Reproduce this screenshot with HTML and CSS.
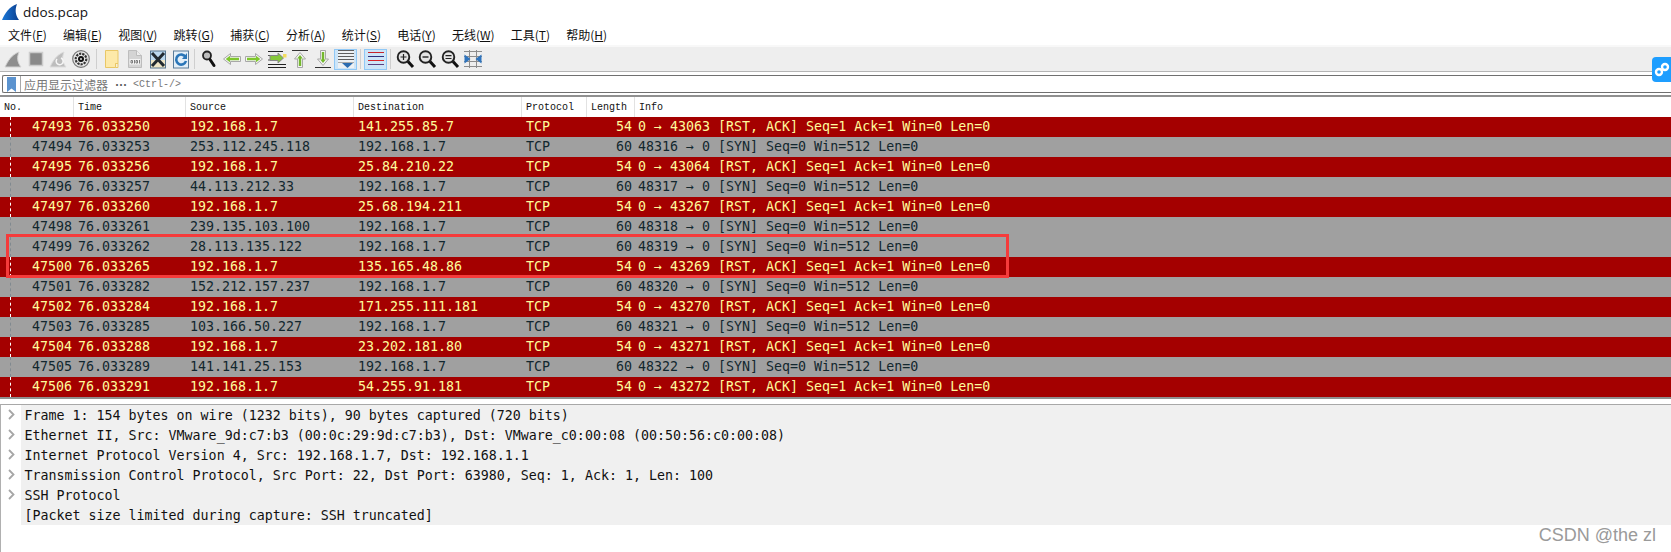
FILE: index.html
```html
<!DOCTYPE html>
<html lang="zh">
<head>
<meta charset="utf-8">
<title>ddos.pcap</title>
<link rel="stylesheet" href="styles.css">
</head>
<body>
<div class="app">
  <div class="titlebar">
    <svg class="fin" width="17" height="17" viewBox="0 0 17 17"><defs><linearGradient id="fg" x1="0" y1="0" x2="1" y2="0"><stop offset="0" stop-color="#1a78d8"/><stop offset="1" stop-color="#0c3f8f"/></linearGradient></defs><path d="M0 16C3 9 7 3 15 0c-2 5-2 11 2 16z" fill="url(#fg)"/></svg>
    <span class="title">ddos.pcap</span>
  </div>
  <div class="menubar">
    <span>文件(<u>F</u>)</span><span>编辑(<u>E</u>)</span><span>视图(<u>V</u>)</span><span>跳转(<u>G</u>)</span><span>捕获(<u>C</u>)</span><span>分析(<u>A</u>)</span><span>统计(<u>S</u>)</span><span>电话(<u>Y</u>)</span><span>无线(<u>W</u>)</span><span>工具(<u>T</u>)</span><span>帮助(<u>H</u>)</span>
  </div>
  <div class="toolbar">
    <span class="tb"><svg viewBox="0 0 20 20"><path d="M2 18C5 12 8 6 16 3c-2 5-2 10 2 15z" fill="#8e8e8e" stroke="#d2d2d2"/></svg></span>
    <span class="tb"><svg viewBox="0 0 20 20"><rect x="3.500" y="3.500" width="13" height="13" fill="#8a8a8a" stroke="#cccccc" stroke-width="1.500"/></svg></span>
    <span class="tb"><svg viewBox="0 0 20 20"><path d="M2 18C5 12 8 6 16 3c-2 5-2 10 2 15z" fill="#bdbdbd" stroke="#dcdcdc"/><path d="M13 9a3.500 3.500 0 1 1-4 1" fill="none" stroke="#f6f6f6" stroke-width="1.500"/></svg></span>
    <span class="tb"><svg viewBox="0 0 20 20"><circle cx="10" cy="10" r="8.300" fill="#e8e8e8" stroke="#777" stroke-width="1.200"/><circle cx="10" cy="10" r="5.300" fill="none" stroke="#333" stroke-width="2.200" stroke-dasharray="2.200 1"/><circle cx="10" cy="10" r="3" fill="#111"/><circle cx="10" cy="10" r="1" fill="#ddd"/></svg></span>
    <span class="sep sep-wide"></span>
    <span class="tb"><svg viewBox="0 0 20 20"><path d="M3.500 1.500h12.500v13h-2.500v4h-10z" fill="#fde9a9" stroke="#e9c766"/><path d="M13.500 14.500h2.500v4h-2.500z" fill="#f7f0d8" stroke="#e9c766"/></svg></span>
    <span class="tb"><svg viewBox="0 0 20 20"><path d="M3.500 1.500h8l5 5v12h-13z" fill="#d4d4d4" stroke="#bdbdbd"/><path d="M11.500 1.500v5h5" fill="#eee" stroke="#bdbdbd"/><rect x="4.500" y="10" width="11" height="5.500" fill="#f4f4f4"/><path d="M6 11.500h1.500v2.500H6zM11 11.500h1.500v2.500H11zM9.500 11v3.500M14.500 11v3.500" fill="none" stroke="#7d7d7d"/></svg></span>
    <span class="tb"><svg viewBox="0 0 20 20"><rect x="2.500" y="2" width="15" height="9" fill="#bcd8ee"/><rect x="2.500" y="11" width="15" height="8" fill="#efe5c6"/><rect x="2.500" y="2" width="15" height="17" fill="none" stroke="#56748d"/><path d="M4 4l12 13M16 4 4 17" stroke="#222a30" stroke-width="3"/></svg></span>
    <span class="tb"><svg viewBox="0 0 20 20"><rect x="2.500" y="2" width="15" height="17" fill="#e3eff8" stroke="#5b7d9a"/><path d="M14.500 8a5 5 0 1 0 .5 4" fill="none" stroke="#2a76b8" stroke-width="2.600"/><path d="M16 4v6h-5z" fill="#2a76b8"/></svg></span>
    <span class="sep"></span>
    <span class="tb"><svg viewBox="0 0 20 20"><circle cx="8" cy="6.500" r="4" fill="#bcbcbc" stroke="#222" stroke-width="1.800"/><path d="M11 10.500l4 6" stroke="#111" stroke-width="3" stroke-linecap="round"/></svg></span>
    <span class="tb"><svg viewBox="0 0 20 20"><path d="M8.500 4.500 1.500 10l7 5.500v-3h10v-5h-10z" fill="#f4f4f4" stroke="#a8a8a8"/><path d="M8 6.800 3.700 10 8 13.200v-2h9v-2.400H8z" fill="#7fc62e"/></svg></span>
    <span class="tb"><svg viewBox="0 0 20 20"><path d="M11.500 4.500 18.500 10l-7 5.500v-3h-10v-5h10z" fill="#f4f4f4" stroke="#a8a8a8"/><path d="M12 6.800 16.300 10 12 13.200v-2H3v-2.400h9z" fill="#7fc62e"/></svg></span>
    <span class="tb"><svg viewBox="0 0 20 20"><path d="M1 2.500h15M1 15.500h18M1 18.500h18" stroke="#222"/><path d="M1 6.500h8M1 11h8" stroke="#555"/><path d="M11 4l5.500 5L11 14v-2.500H3v-5h8z" fill="#86c83a" stroke="#888"/><rect x="16" y="5" width="3.500" height="3.500" fill="#f3dc5e"/></svg></span>
    <span class="tb"><svg viewBox="0 0 20 20"><path d="M2 1.500h16" stroke="#333"/><path d="M10 3.500l5.500 6.500H12.500v8.500h-5V10H4.500z" fill="#f4f4f4" stroke="#a8a8a8"/><path d="M10 6l2.800 3.500H11.200V17H8.800V9.500H7.200z" fill="#74b82e"/></svg></span>
    <span class="tb"><svg viewBox="0 0 20 20"><path d="M2 18.500h16" stroke="#333"/><path d="M10 16.500l5.500-6.500H12.500V1.500h-5V10H4.500z" fill="#f4f4f4" stroke="#a8a8a8"/><path d="M10 14l2.800-3.500H11.200V3H8.800v7.500H7.200z" fill="#74b82e"/></svg></span>
    <span class="tb active"><svg viewBox="0 0 20 20"><rect x="2" y="1" width="16" height="18" fill="#eef1f3"/><path d="M2 1.500h16M2 4.500h16M2 7.500h16M2 10.500h16" stroke="#5f5f5f"/><path d="M2 13.500h16" stroke="#aaa"/><path d="M6 14h11l-5.500 5z" fill="#2b6cb0"/></svg></span>
    <span class="sep sep-mid"></span>
    <span class="tb active"><svg viewBox="0 0 20 20"><path d="M2 3.500h16" stroke="#c9242b"/><path d="M2 7.500h16" stroke="#2f2f7d"/><path d="M2 11.500h16" stroke="#d8232a"/><path d="M2 15.500h16" stroke="#5b3f80"/></svg></span>
    <span class="sep sep-last"></span>
    <span class="tb"><svg viewBox="0 0 20 20"><circle cx="8.500" cy="8" r="5.800" fill="#e4e4e4" stroke="#222" stroke-width="1.900"/><path d="M5.500 8h6M8.500 5v6" stroke="#222" stroke-width="1.200"/><path d="M13 12.500l5 5.500" stroke="#111" stroke-width="3"/></svg></span>
    <span class="tb"><svg viewBox="0 0 20 20"><circle cx="8.500" cy="8" r="5.800" fill="#e4e4e4" stroke="#222" stroke-width="1.900"/><path d="M5.500 8h6" stroke="#222" stroke-width="1.400"/><path d="M13 12.500l5 5.500" stroke="#111" stroke-width="3"/></svg></span>
    <span class="tb"><svg viewBox="0 0 20 20"><circle cx="8.500" cy="8" r="5.800" fill="#e4e4e4" stroke="#222" stroke-width="1.900"/><path d="M5.500 6.700h6M5.500 9.500h6" stroke="#222" stroke-width="1.200"/><path d="M13 12.500l5 5.500" stroke="#111" stroke-width="3"/></svg></span>
    <span class="tb"><svg viewBox="0 0 20 20"><path d="M1 2.500h18M1 17.500h18M1 7.500h18M1 12.500h18M6.500 1v18M13.500 1v18" stroke="#8c8c8c"/><path d="M1.500 5.500l6 4.500-6 4.500zM18.500 5.500l-6 4.500 6 4.500z" fill="#2f74bd"/></svg></span>
  </div>
  <div class="filterbar">
    <div class="filter">
      <span class="bookmark"><svg width="9" height="15" viewBox="0 0 9 15"><path d="M0 0h9v15L4.500 11.500 0 15z" fill="#5b93cf"/></svg></span>
      <span class="placeholder">应用显示过滤器<span class="dots">⋯</span><span class="mono">&lt;Ctrl-/&gt;</span></span>
    </div>
  </div>
  <div class="packets">
    <div class="row head"><span class="c no">No.</span><span class="c time">Time</span><span class="c src">Source</span><span class="c dst">Destination</span><span class="c proto">Protocol</span><span class="c len">Length</span><span class="c info">Info</span></div>
    <div class="row red"><span class="c no">47493</span><span class="c time">76.033250</span><span class="c src">192.168.1.7</span><span class="c dst">141.255.85.7</span><span class="c proto">TCP</span><span class="c len">54</span><span class="c info">0 → 43063 [RST, ACK] Seq=1 Ack=1 Win=0 Len=0</span></div>
    <div class="row gray"><span class="c no">47494</span><span class="c time">76.033253</span><span class="c src">253.112.245.118</span><span class="c dst">192.168.1.7</span><span class="c proto">TCP</span><span class="c len">60</span><span class="c info">48316 → 0 [SYN] Seq=0 Win=512 Len=0</span></div>
    <div class="row red"><span class="c no">47495</span><span class="c time">76.033256</span><span class="c src">192.168.1.7</span><span class="c dst">25.84.210.22</span><span class="c proto">TCP</span><span class="c len">54</span><span class="c info">0 → 43064 [RST, ACK] Seq=1 Ack=1 Win=0 Len=0</span></div>
    <div class="row gray"><span class="c no">47496</span><span class="c time">76.033257</span><span class="c src">44.113.212.33</span><span class="c dst">192.168.1.7</span><span class="c proto">TCP</span><span class="c len">60</span><span class="c info">48317 → 0 [SYN] Seq=0 Win=512 Len=0</span></div>
    <div class="row red"><span class="c no">47497</span><span class="c time">76.033260</span><span class="c src">192.168.1.7</span><span class="c dst">25.68.194.211</span><span class="c proto">TCP</span><span class="c len">54</span><span class="c info">0 → 43267 [RST, ACK] Seq=1 Ack=1 Win=0 Len=0</span></div>
    <div class="row gray"><span class="c no">47498</span><span class="c time">76.033261</span><span class="c src">239.135.103.100</span><span class="c dst">192.168.1.7</span><span class="c proto">TCP</span><span class="c len">60</span><span class="c info">48318 → 0 [SYN] Seq=0 Win=512 Len=0</span></div>
    <div class="row gray"><span class="c no">47499</span><span class="c time">76.033262</span><span class="c src">28.113.135.122</span><span class="c dst">192.168.1.7</span><span class="c proto">TCP</span><span class="c len">60</span><span class="c info">48319 → 0 [SYN] Seq=0 Win=512 Len=0</span></div>
    <div class="row red"><span class="c no">47500</span><span class="c time">76.033265</span><span class="c src">192.168.1.7</span><span class="c dst">135.165.48.86</span><span class="c proto">TCP</span><span class="c len">54</span><span class="c info">0 → 43269 [RST, ACK] Seq=1 Ack=1 Win=0 Len=0</span></div>
    <div class="row gray"><span class="c no">47501</span><span class="c time">76.033282</span><span class="c src">152.212.157.237</span><span class="c dst">192.168.1.7</span><span class="c proto">TCP</span><span class="c len">60</span><span class="c info">48320 → 0 [SYN] Seq=0 Win=512 Len=0</span></div>
    <div class="row red"><span class="c no">47502</span><span class="c time">76.033284</span><span class="c src">192.168.1.7</span><span class="c dst">171.255.111.181</span><span class="c proto">TCP</span><span class="c len">54</span><span class="c info">0 → 43270 [RST, ACK] Seq=1 Ack=1 Win=0 Len=0</span></div>
    <div class="row gray"><span class="c no">47503</span><span class="c time">76.033285</span><span class="c src">103.166.50.227</span><span class="c dst">192.168.1.7</span><span class="c proto">TCP</span><span class="c len">60</span><span class="c info">48321 → 0 [SYN] Seq=0 Win=512 Len=0</span></div>
    <div class="row red"><span class="c no">47504</span><span class="c time">76.033288</span><span class="c src">192.168.1.7</span><span class="c dst">23.202.181.80</span><span class="c proto">TCP</span><span class="c len">54</span><span class="c info">0 → 43271 [RST, ACK] Seq=1 Ack=1 Win=0 Len=0</span></div>
    <div class="row gray"><span class="c no">47505</span><span class="c time">76.033289</span><span class="c src">141.141.25.153</span><span class="c dst">192.168.1.7</span><span class="c proto">TCP</span><span class="c len">60</span><span class="c info">48322 → 0 [SYN] Seq=0 Win=512 Len=0</span></div>
    <div class="row red"><span class="c no">47506</span><span class="c time">76.033291</span><span class="c src">192.168.1.7</span><span class="c dst">54.255.91.181</span><span class="c proto">TCP</span><span class="c len">54</span><span class="c info">0 → 43272 [RST, ACK] Seq=1 Ack=1 Win=0 Len=0</span></div>
    <div class="highlight"></div>
  </div>
  <div class="details">
    <div class="node"><svg class="arrow" width="7" height="11" viewBox="0 0 7 11"><path d="M1 1l4.500 4.500L1 10" fill="none" stroke="#a6a6a6" stroke-width="1.800"/></svg>Frame 1: 154 bytes on wire (1232 bits), 90 bytes captured (720 bits)</div>
    <div class="node"><svg class="arrow" width="7" height="11" viewBox="0 0 7 11"><path d="M1 1l4.500 4.500L1 10" fill="none" stroke="#a6a6a6" stroke-width="1.800"/></svg>Ethernet II, Src: VMware_9d:c7:b3 (00:0c:29:9d:c7:b3), Dst: VMware_c0:00:08 (00:50:56:c0:00:08)</div>
    <div class="node"><svg class="arrow" width="7" height="11" viewBox="0 0 7 11"><path d="M1 1l4.500 4.500L1 10" fill="none" stroke="#a6a6a6" stroke-width="1.800"/></svg>Internet Protocol Version 4, Src: 192.168.1.7, Dst: 192.168.1.1</div>
    <div class="node"><svg class="arrow" width="7" height="11" viewBox="0 0 7 11"><path d="M1 1l4.500 4.500L1 10" fill="none" stroke="#a6a6a6" stroke-width="1.800"/></svg>Transmission Control Protocol, Src Port: 22, Dst Port: 63980, Seq: 1, Ack: 1, Len: 100</div>
    <div class="node"><svg class="arrow" width="7" height="11" viewBox="0 0 7 11"><path d="M1 1l4.500 4.500L1 10" fill="none" stroke="#a6a6a6" stroke-width="1.800"/></svg>SSH Protocol</div>
    <div class="node">[Packet size limited during capture: SSH truncated]</div>
  </div>
  <div class="float-btn"><svg width="18" height="18" viewBox="0 0 18 18"><circle cx="6" cy="11" r="3" fill="none" stroke="#fff" stroke-width="2.400"/><circle cx="12" cy="6" r="3" fill="none" stroke="#fff" stroke-width="2.400"/></svg></div>
  <div class="watermark">CSDN @the zl</div>
</div>
</body>
</html>
```
FILE: styles.css
```css
* { box-sizing: border-box; }
html, body { margin: 0; padding: 0; background: #fff; }
.app { position: relative; width: 1671px; height: 552px; overflow: hidden; font-family: "DejaVu Sans Mono", monospace; }

.titlebar { height: 24px; display: flex; align-items: center; padding-left: 2px; gap: 4px; }
.title { font: 13.5px "Open Sans", sans-serif; color: #111; }

.menubar { height: 21px; display: flex; align-items: center; gap: 16.2px; padding-left: 8px; font: 12px "Noto Sans CJK SC", sans-serif; color: #111; }

.toolbar { height: 27px; padding-left: 1.5px; display: flex; align-items: center; background: #eeeeee; border-top: 2px solid #f8f8f8; border-bottom: 1px solid #b4b4b4; }
.tb { width: 22.8px; height: 21px; flex: none; display: flex; align-items: center; justify-content: center; }
.tb svg { width: 20px; height: 20px; flex: none; }
.tb.active { background: #cde5f8; outline: 1px solid #90c8f6; outline-offset: -1px; }
.sep { width: 1px; height: 20px; flex: none; background: #cfcfcf; margin: 0 2.15px; }
.sep-wide { margin: 0 3.65px; }
.sep-mid { margin: 0 3.15px; }
.sep-last { margin: 0 2.6px; }

.filterbar { padding: 3px 0 0 2px; height: 23px; }
.filter { height: 18px; display: flex; align-items: center; border: 1px solid #707070; border-right: 0; background: #fff; border-radius: 2px 0 0 2px; }
.bookmark { width: 18px; height: 16px; flex: none; display: flex; justify-content: center; padding-top: 1px; border-right: 1px solid #a8a8a8; }
.placeholder { padding-left: 3px; display: flex; align-items: center; font: 12px "Noto Sans CJK SC", sans-serif; color: #777; }
.dots { width: 25px; padding-left: 7px; font-weight: 700; color: #555; }
.mono { font: 10px "Liberation Mono", monospace; }

.packets { position: relative; border-top: 2px solid #909090; border-bottom: 2px solid #909090; }
.row { display: flex; height: 20px; align-items: center; padding-bottom: 2px; font-size: 13.3px; position: relative; white-space: pre; }
.c { flex: none; padding-left: 4px; }
.no { width: 74px; padding: 0 2px 0 0; text-align: right; }
.time { width: 112px; }
.src, .dst { width: 168px; }
.proto { width: 65px; }
.len { width: 48px; padding: 0 3px 0 0; text-align: right; }
.info { flex: 1; padding-left: 3px; }

.head { padding-bottom: 0; font-size: 10px; font-family: "Liberation Mono", monospace; color: #111; background: #fff; }
.head .c { height: 20px; line-height: 22px; border-right: 1px solid #e2e2e2; padding-left: 4px; text-align: left; }
.head .info { border-right: 0; }

.red { background: #a40000; color: #fffc9c; }
.gray { background: #a0a0a0; color: #12272e; }
.red::before, .gray::before { content: ""; position: absolute; left: 10px; top: 0; bottom: 0; border-left: 1px dashed #fff; }
.gray::before { border-left-color: #808a90; }

.highlight { position: absolute; left: 6px; top: 137px; width: 1003px; height: 44px; border: 3px solid #f53b3b; }

.details { margin-top: 5px; height: 148px; border-top: 1px solid #a8a8a8; border-left: 1px solid #b0b0b0; font-size: 13.3px; color: #111; }
.node { height: 20px; line-height: 22px; margin-left: 20px; padding-left: 3.5px; background: #f0f0f0; position: relative; white-space: pre; }
.arrow { position: absolute; left: -13px; top: 4px; }

.float-btn { position: absolute; left: 1652px; top: 57px; width: 30px; height: 25px; border-radius: 4px; background: #1e9eff; display: flex; align-items: center; padding-left: 1px; }
.watermark { position: absolute; right: 15px; top: 525px; font: 18px "Liberation Sans", sans-serif; color: #9a9a9a; }
```
